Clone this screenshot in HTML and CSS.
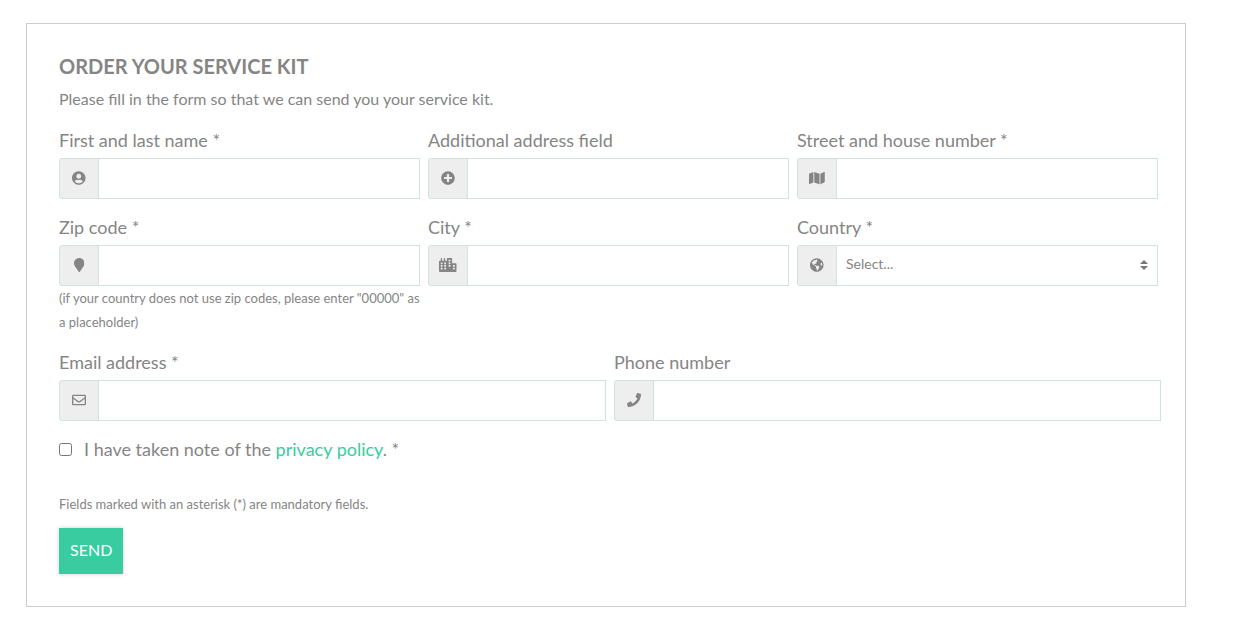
FILE: index.html
```html
<!DOCTYPE html>
<html lang="en">
<head>
    <meta charset="UTF-8">
    <meta name="viewport" content="width=device-width, initial-scale=1.0">
    <title>Order your service kit</title>
    <link rel="stylesheet" href="styles.css">
</head>
<body>
    <form class="order-form">
        <h1>ORDER YOUR SERVICE KIT</h1>
        <p class="intro">Please fill in the form so that we can send you your service kit.</p>

        <div class="row row-three">
            <div class="field">
                <label for="name">First and last name *</label>
                <div class="input-group">
                    <span class="icon"><svg viewBox="0 0 496 512"><path d="M248 8C111 8 0 119 0 256s111 248 248 248 248-111 248-248S385 8 248 8zm0 96c48.600 0 88 39.400 88 88s-39.400 88-88 88-88-39.400-88-88 39.400-88 88-88zm0 344c-58.700 0-111.300-26.600-146.500-68.200 18.800-35.400 55.600-59.800 98.500-59.800 2.400 0 4.800.4 7.100 1.100 13 4.200 26.600 6.900 40.900 6.900 14.300 0 28-2.700 40.900-6.900 2.300-.7 4.700-1.100 7.100-1.100 42.900 0 79.700 24.400 98.500 59.800C359.300 421.400 306.700 448 248 448z"/></svg></span>
                    <input type="text" id="name">
                </div>
            </div>
            <div class="field">
                <label for="additional">Additional address field</label>
                <div class="input-group">
                    <span class="icon"><svg viewBox="0 0 512 512"><path d="M256 8C119 8 8 119 8 256s111 248 248 248 248-111 248-248S393 8 256 8zm144 276c0 6.600-5.400 12-12 12h-92v92c0 6.600-5.400 12-12 12h-56c-6.600 0-12-5.400-12-12v-92h-92c-6.600 0-12-5.400-12-12v-56c0-6.600 5.400-12 12-12h92v-92c0-6.600 5.400-12 12-12h56c6.600 0 12 5.400 12 12v92h92c6.600 0 12 5.400 12 12v56z"/></svg></span>
                    <input type="text" id="additional">
                </div>
            </div>
            <div class="field">
                <label for="street">Street and house number *</label>
                <div class="input-group">
                    <span class="icon"><svg viewBox="0 0 576 512"><path d="M0 117.660v346.320c0 11.320 11.430 19.060 21.940 14.860L160 416V32L20.120 87.950A32.006 32.006 0 0 0 0 117.660zM192 416l192 64V96L192 32v384zM554.060 33.160L416 96v384l139.880-55.950A31.996 31.996 0 0 0 576 394.340V48.020c0-11.320-11.430-19.060-21.940-14.860z"/></svg></span>
                    <input type="text" id="street">
                </div>
            </div>
        </div>

        <div class="row row-three">
            <div class="field">
                <label for="zip">Zip code *</label>
                <div class="input-group">
                    <span class="icon"><svg viewBox="0 0 384 512"><path d="M172.268 501.670C26.970 291.031 0 269.413 0 192 0 85.961 85.961 0 192 0s192 85.961 192 192c0 77.413-26.970 99.031-172.268 309.670-9.535 13.774-29.930 13.773-39.464 0z"/></svg></span>
                    <input type="text" id="zip" aria-describedby="zip-hint">
                </div>
                <p class="small" id="zip-hint">(if your country does not use zip codes, please enter "00000" as a placeholder)</p>
            </div>
            <div class="field">
                <label for="city">City *</label>
                <div class="input-group">
                    <span class="icon"><svg viewBox="0 0 640 512"><path d="M616 192H480V24c0-13.260-10.740-24-24-24H312c-13.260 0-24 10.740-24 24v72h-64V16c0-8.840-7.160-16-16-16h-16c-8.840 0-16 7.160-16 16v80h-64V16c0-8.840-7.160-16-16-16H80c-8.840 0-16 7.160-16 16v80H24c-13.260 0-24 10.740-24 24v360c0 17.670 14.330 32 32 32h576c17.670 0 32-14.330 32-32V216c0-13.260-10.750-24-24-24zM128 404c0 6.630-5.370 12-12 12H76c-6.630 0-12-5.370-12-12v-40c0-6.630 5.370-12 12-12h40c6.630 0 12 5.370 12 12v40zm0-96c0 6.630-5.370 12-12 12H76c-6.630 0-12-5.370-12-12v-40c0-6.630 5.370-12 12-12h40c6.630 0 12 5.370 12 12v40zm0-96c0 6.630-5.370 12-12 12H76c-6.630 0-12-5.370-12-12v-40c0-6.630 5.370-12 12-12h40c6.630 0 12 5.370 12 12v40zm128 192c0 6.630-5.370 12-12 12h-40c-6.630 0-12-5.370-12-12v-40c0-6.630 5.370-12 12-12h40c6.630 0 12 5.370 12 12v40zm0-96c0 6.630-5.370 12-12 12h-40c-6.630 0-12-5.370-12-12v-40c0-6.630 5.370-12 12-12h40c6.630 0 12 5.370 12 12v40zm0-96c0 6.630-5.370 12-12 12h-40c-6.630 0-12-5.370-12-12v-40c0-6.630 5.370-12 12-12h40c6.630 0 12 5.370 12 12v40zm160 96c0 6.630-5.370 12-12 12h-40c-6.630 0-12-5.370-12-12v-40c0-6.630 5.370-12 12-12h40c6.630 0 12 5.370 12 12v40zm0-96c0 6.630-5.370 12-12 12h-40c-6.630 0-12-5.370-12-12v-40c0-6.630 5.370-12 12-12h40c6.630 0 12 5.370 12 12v40zm0-96c0 6.630-5.370 12-12 12h-40c-6.630 0-12-5.370-12-12V76c0-6.630 5.370-12 12-12h40c6.630 0 12 5.370 12 12v40zm160 288c0 6.630-5.370 12-12 12h-40c-6.630 0-12-5.370-12-12v-40c0-6.630 5.370-12 12-12h40c6.630 0 12 5.370 12 12v40zm0-96c0 6.630-5.370 12-12 12h-40c-6.630 0-12-5.370-12-12v-40c0-6.630 5.370-12 12-12h40c6.630 0 12 5.370 12 12v40z"/></svg></span>
                    <input type="text" id="city">
                </div>
            </div>
            <div class="field">
                <label for="country">Country *</label>
                <div class="input-group">
                    <span class="icon"><svg viewBox="0 0 496 512"><path d="M248 8C111.030 8 0 119.030 0 256s111.030 248 248 248 248-111.030 248-248S384.970 8 248 8zm82.290 357.600c-3.900 3.880-7.990 7.950-11.310 11.280-2.990 3-5.100 6.700-6.170 10.710-1.510 5.660-2.730 11.380-4.770 16.870l-17.390 46.850c-13.760 3-28 4.690-42.650 4.690v-27.380c1.690-12.620-7.640-36.260-22.630-51.250-6-6-9.370-14.140-9.370-22.630v-32.010c0-11.640-6.270-22.340-16.460-27.970-14.370-7.950-34.810-19.060-48.810-26.110-11.480-5.780-22.100-13.140-31.650-21.750l-.8-.72a114.792 114.792 0 0 1-18.060-20.740c-9.380-13.770-24.660-36.420-34.590-51.140 20.470-45.500 57.360-82.040 103.200-101.890l24.010 12.010C203.480 89.740 216 82.010 216 70.110v-11.300c7.990-1.290 16.120-2.110 24.390-2.420l28.300 28.300c6.250 6.250 6.250 16.380 0 22.630L264 112l-10.340 10.340c-3.120 3.120-3.120 8.190 0 11.310l4.690 4.690c3.120 3.120 3.120 8.190 0 11.310l-8 8a8.008 8.008 0 0 1-5.660 2.340h-8.990c-2.080 0-4.080.81-5.580 2.270l-9.920 9.650a8.008 8.008 0 0 0-1.580 9.310l15.590 31.190c2.660 5.320-1.210 11.580-7.150 11.580h-5.640c-1.930 0-3.790-.7-5.240-1.960l-9.280-8.060a16.017 16.017 0 0 0-15.550-3.100l-31.170 10.390a11.950 11.950 0 0 0-8.170 11.340c0 4.530 2.560 8.660 6.610 10.690l11.080 5.540c9.410 4.710 19.790 7.160 30.310 7.160s22.590 27.290 32 32h66.750c8.490 0 16.620 3.370 22.630 9.370l13.690 13.690a30.503 30.503 0 0 1 8.930 21.570 46.536 46.536 0 0 1-13.720 32.980zM417 274.250c-5.790-1.450-10.840-5-14.150-9.970l-17.980-26.970a23.970 23.970 0 0 1 0-26.620l19.590-29.380c2.320-3.470 5.500-6.290 9.240-8.150l12.980-6.490C440.200 193.590 448 223.870 448 256c0 8.670-.74 17.160-1.820 25.540L417 274.250z"/></svg></span>
                    <select id="country">
                        <option>Select...</option>
                    </select>
                </div>
            </div>
        </div>

        <div class="row row-two">
            <div class="field">
                <label for="email">Email address *</label>
                <div class="input-group">
                    <span class="icon"><svg viewBox="0 0 512 512"><path d="M464 64H48C21.490 64 0 85.490 0 112v288c0 26.510 21.490 48 48 48h416c26.510 0 48-21.490 48-48V112c0-26.510-21.490-48-48-48zm0 48v40.805c-22.422 18.259-58.168 46.651-134.587 106.490-16.841 13.247-50.201 45.072-73.413 44.701-23.208.375-56.579-31.459-73.413-44.701C106.180 199.465 70.425 171.067 48 152.805V112h416zM48 400V214.398c22.914 18.251 55.409 43.862 104.938 82.646 21.857 17.205 60.134 55.186 103.062 54.955 42.717.231 80.509-37.199 103.053-54.947 49.528-38.783 82.032-64.401 104.947-82.653V400H48z"/></svg></span>
                    <input type="email" id="email">
                </div>
            </div>
            <div class="field">
                <label for="phone">Phone number</label>
                <div class="input-group">
                    <span class="icon"><svg viewBox="0 0 512 512"><path d="M493.400 24.600l-104-24c-11.300-2.600-22.900 3.300-27.500 13.900l-48 112c-4.200 9.800-1.400 21.300 6.900 28l60.600 49.600c-36 76.700-98.900 140.500-177.200 177.200l-49.600-60.600c-6.800-8.300-18.200-11.100-28-6.900l-112 48C3.900 366.500-2 378.100.6 389.400l24 104C27.100 504.200 36.700 512 48 512c256.100 0 464-207.500 464-464 0-11.200-7.700-20.900-18.600-23.400z"/></svg></span>
                    <input type="tel" id="phone">
                </div>
            </div>
        </div>

        <div class="privacy">
            <input type="checkbox" id="privacy">
            <label for="privacy">I have taken note of the <a href="#">privacy policy</a>. *</label>
        </div>

        <p class="small">Fields marked with an asterisk (*) are mandatory fields.</p>
        <button type="submit">SEND</button>
    </form>
</body>
</html>
```
FILE: styles.css
```css
* {
    box-sizing: border-box;
}

body {
    margin: 23px 47px 25px 26px;
    font-family: Lato, sans-serif;
    font-size: 18px;
    line-height: 27px;
    color: #858585;
    background-color: #fff;
}

.order-form {
    padding: 31px 24px 32px 32px;
    border: 1px solid #ccc;
}

h1 {
    margin: 0 0 10px;
    font-size: 20px;
    line-height: 22px;
    font-weight: bold;
}

.intro {
    margin: 0 0 16px;
    font-size: 16px;
    line-height: 24px;
}

.row {
    display: grid;
    gap: 8px;
    margin-bottom: 15px;
}

.row-three {
    grid-template-columns: repeat(3, 1fr);
    margin-right: 3px;
}

.row-two {
    grid-template-columns: repeat(2, 1fr);
}

.field label {
    display: block;
    margin-bottom: 4px;
}

.input-group {
    display: flex;
    height: 41px;
}

.icon {
    display: flex;
    align-items: center;
    justify-content: center;
    width: 40px;
    padding-bottom: 1px;
    background-color: #eee;
    border: 1px solid #d1e3de;
    border-radius: 3px 0 0 3px;
}

.icon svg {
    height: 14px;
    fill: #858585;
}

.input-group input,
.input-group select {
    flex: 1;
    min-width: 0;
    margin: 0 0 0 -1px;
    padding: 0 9px;
    border: 1px solid #d1e3de;
    border-radius: 0;
    font-family: inherit;
    font-size: 14px;
    color: #858585;
    background-color: #fff;
}

.input-group select {
    appearance: none;
    padding-bottom: 4px;
    background: #fff url("data:image/svg+xml,%3Csvg xmlns='http://www.w3.org/2000/svg' viewBox='0 0 4 5'%3E%3Cpath fill='%23777' d='M2 0L0 2h4zm0 5L0 3h4z'/%3E%3C/svg%3E") no-repeat right 9px top 14px / 8px 10px;
}

.small {
    margin: 0;
    font-size: 13px;
    line-height: 24px;
}

.privacy {
    display: flex;
    align-items: center;
    gap: 12px;
    margin-bottom: 29px;
}

.privacy input {
    width: 13px;
    height: 13px;
    margin: 0;
}

a {
    color: #38cca0;
    text-decoration: none;
}

button {
    display: block;
    height: 46px;
    margin-top: 12px;
    padding: 0 11px 3px;
    border: none;
    font-family: inherit;
    font-size: 16px;
    color: #fff;
    background-color: #38cca0;
    box-shadow: 0 0 4px rgba(0, 0, 0, 0.2);
    cursor: pointer;
}
```
